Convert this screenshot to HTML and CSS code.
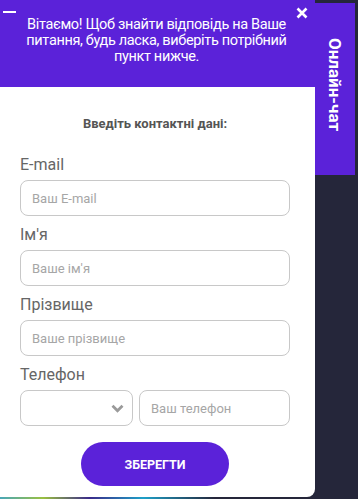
FILE: index.html
```html
<!DOCTYPE html>
<html lang="uk">
<head>
<meta charset="utf-8">
<link rel="stylesheet" href="styles.css">
</head>
<body>
<div class="main">
  <div class="panel">
    <div class="header">
      <span class="minimize"></span>
      <svg class="close" width="12" height="12" viewBox="0 0 12 12"><path d="M1.5 1.5 L10.5 10.5 M10.5 1.5 L1.5 10.5" stroke="#fff" stroke-width="2.6" stroke-linecap="butt"/></svg>
      <p class="greeting">Вітаємо! Щоб знайти відповідь на Ваше питання, будь ласка, виберіть потрібний пункт нижче.</p>
    </div>
    <div class="body">
      <h2 class="title">Введіть контактні дані:</h2>
      <div class="group">
        <label class="label">E-mail</label>
        <div class="input"><span class="ph">Ваш E-mail</span></div>
      </div>
      <div class="group">
        <label class="label">Ім'я</label>
        <div class="input"><span class="ph">Ваше ім'я</span></div>
      </div>
      <div class="group">
        <label class="label">Прізвище</label>
        <div class="input"><span class="ph">Ваше прізвище</span></div>
      </div>
      <div class="group">
        <label class="label">Телефон</label>
        <div class="phone-row">
          <div class="input select">
            <svg class="chev" width="13" height="9" viewBox="0 0 13 9"><path d="M1.5 1.8 L6.5 6.8 L11.5 1.8" fill="none" stroke="#9a9a9a" stroke-width="2.8"/></svg>
          </div>
          <div class="input phone"><span class="ph">Ваш телефон</span></div>
        </div>
      </div>
      <div class="btn-wrap"><button class="btn">ЗБЕРЕГТИ</button></div>
    </div>
  </div>
  <div class="tab"><span class="tab-text">Онлайн-чат</span></div>
</div>
<div class="strip"></div>
</body>
</html>
```
FILE: styles.css
```css
* { box-sizing: border-box; }
html, body { margin: 0; padding: 0; }
body {
  width: 358px;
  height: 499px;
  background: #25263a;
  font-family: Roboto, "Noto Sans", sans-serif;
  overflow: hidden;
}
.main {
  display: flex;
  align-items: flex-start;
  height: 497px;
}
.panel {
  width: 315px;
  height: 497px;
  background: #fff;
  border-bottom-right-radius: 8px;
  display: flex;
  flex-direction: column;
  overflow: hidden;
}
.header {
  position: relative;
  height: 87px;
  background: #5b22d9;
  padding: 17px 18px 0 16px;
}
.minimize {
  position: absolute;
  left: 3px;
  top: 11px;
  width: 13px;
  height: 2px;
  background: #fff;
}
.close {
  position: absolute;
  left: 296px;
  top: 7px;
}
.greeting {
  margin: 0;
  color: #fff;
  font-size: 14.5px;
  letter-spacing: -0.35px;
  line-height: 16px;
  text-align: center;
}
.body {
  padding: 29px 25px 0 20px;
}
.title {
  margin: 0 0 23px;
  font-size: 13px;
  line-height: 16px;
  font-weight: 700;
  color: #555;
  text-align: center;
}
.group {
  margin-bottom: 9px;
}
.label {
  display: block;
  font-size: 16px;
  line-height: 20px;
  color: #666;
  margin-bottom: 5px;
}
.input {
  height: 36px;
  border: 1px solid #c8c8c8;
  border-radius: 8px;
  display: flex;
  align-items: center;
  padding-left: 11px;
}
.ph {
  font-size: 13px;
  color: #a6a6a6;
}
.phone-row {
  display: flex;
  gap: 6px;
}
.select {
  width: 113px;
  justify-content: flex-end;
  padding-right: 8px;
}
.phone {
  flex: 1;
}
.btn-wrap {
  display: flex;
  justify-content: center;
  padding-top: 7px;
}
.btn {
  width: 148px;
  height: 44px;
  border: none;
  border-radius: 22px;
  background: #5b22d9;
  color: #fff;
  font-family: Roboto, "Noto Sans", sans-serif;
  font-size: 12.5px;
  font-weight: 700;
  padding: 0;
}
.tab {
  width: 40px;
  height: 172px;
  margin-top: 3px;
  background: #5b22d9;
  display: flex;
  justify-content: center;
  padding-top: 35px;
}
.tab-text {
  writing-mode: vertical-rl;
  color: #fff;
  font-size: 17px;
  font-weight: 700;
  line-height: 20px;
  height: max-content;
}
.strip {
  height: 2px;
  background: linear-gradient(90deg, #4aa7b8 0%, #9ac040 12%, #3a2a8a 25%, #1ea0c8 40%, #25263a 60%, #25263a 100%);
}
```
